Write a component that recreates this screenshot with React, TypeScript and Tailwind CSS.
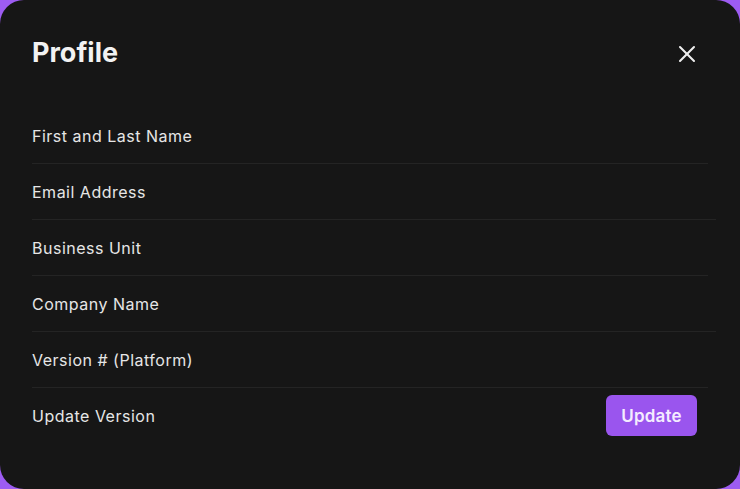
import { X } from 'lucide-react'

const fields = [
  'First and Last Name',
  'Email Address',
  'Business Unit',
  'Company Name',
  'Version # (Platform)',
]

export default function App() {
  return (
    <div
      className="h-[489px] w-[740px] bg-[#9d5cf2]"
      style={{ fontFamily: 'Inter, "Noto Sans", sans-serif' }}
    >
      <div className="flex h-full w-full flex-col rounded-[24px] bg-[#161616] px-8 pt-8 text-[#e6e6e6]">
        <div className="flex h-[40px] items-center justify-between pt-[2px]">
          <h1 className="text-[27px] font-bold leading-[40px] text-[#f2f2f2]">Profile</h1>
          <button className="mr-[7px] mt-[1px] text-[#eeeeee]">
            <X size={28} strokeWidth={1.75} />
          </button>
        </div>

        <div className="mt-[36px] flex flex-col">
          {fields.map((label, i) => (
            <div key={label}>
              <div className="flex h-[55px] items-center text-[16px] tracking-[0.5px]">
                {label}
              </div>
              <div className={`h-px bg-[#242424] ${i % 2 === 1 ? '-mr-2' : ''}`} />
            </div>
          ))}
          <div className="flex h-[55px] items-center justify-between text-[16px] tracking-[0.5px]">
            <span>Update Version</span>
            <button className="mr-[11px] h-[41px] w-[91px] rounded-[6px] bg-[#9a55ee] pt-[3px] text-[17px] font-semibold tracking-[0.2px] text-[#f4ecff]">
              Update
            </button>
          </div>
        </div>
      </div>
    </div>
  )
}
